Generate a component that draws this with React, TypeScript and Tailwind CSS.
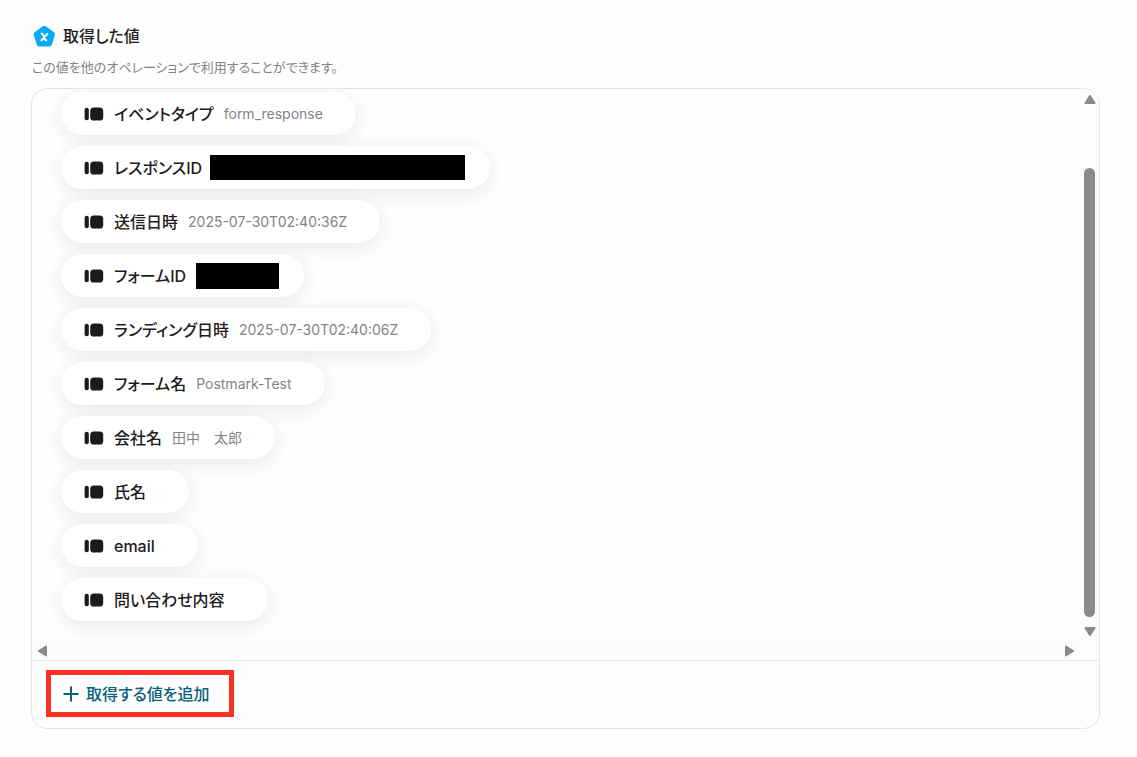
import React from "react";

interface FieldItem {
  label: string;
  value?: string;
  masked?: "long" | "short";
}

const fields: FieldItem[] = [
  { label: "イベントタイプ", value: "form_response" },
  { label: "レスポンスID", masked: "long" },
  { label: "送信日時", value: "2025-07-30T02:40:36Z" },
  { label: "フォームID", masked: "short" },
  { label: "ランディング日時", value: "2025-07-30T02:40:06Z" },
  { label: "フォーム名", value: "Postmark-Test" },
  { label: "会社名", value: "田中　太郎" },
  { label: "氏名" },
  { label: "email" },
  { label: "問い合わせ内容" },
];

const FieldIcon = () => (
  <svg className="h-[14px] w-5 shrink-0" viewBox="0 0 20 14" fill="#1c1a1e" aria-hidden="true">
    <rect x="0.6" y="0.7" width="4.2" height="12.6" rx="2" />
    <rect x="6.2" y="0.5" width="13" height="13" rx="3.6" />
  </svg>
);

const PentagonIcon = () => (
  <svg className="size-6 shrink-0" viewBox="0 0 24 24" aria-hidden="true">
    <path
      d="M10.8 2.3a2.6 2.6 0 0 1 3 0l8.2 6a2.4 2.4 0 0 1 .8 2.6l-3 9.9a2.3 2.3 0 0 1-2.2 1.6H7a2.3 2.3 0 0 1-2.2-1.6l-3-9.9a2.4 2.4 0 0 1 .8-2.6z"
      fill="#06abf6"
    />
    <path
      d="M8.8 9.8h1.1c.5 0 .8.3 1 .8l2.2 5c.2.5.5.8 1 .8h1.1M16.2 9.8h-.9l-5.8 6.6h-1"
      fill="none"
      stroke="#fff"
      strokeWidth="1.9"
      strokeLinejoin="round"
    />
  </svg>
);

interface ArrowProps {
  d: string;
  label: string;
}

const ScrollArrow: React.FC<ArrowProps> = ({ d, label }) => (
  <button type="button" aria-label={label} className="shrink-0">
    <svg className="size-[14px]" viewBox="0 0 14 14" fill="#8b898c" stroke="#8b898c" strokeWidth="2" strokeLinejoin="round">
      <path d={d} />
    </svg>
  </button>
);

const FieldPill: React.FC<{ item: FieldItem }> = ({ item }) => (
  <li className="flex h-[43px] items-center gap-[10px] rounded-full bg-white pr-[33px] pl-[23px] whitespace-nowrap shadow-[0_4px_18px_rgba(60,40,80,0.11)]">
    <FieldIcon />
    <span className="text-base font-medium text-[#1e1c20]">{item.label}</span>
    <span className="text-sm text-[#858388]">{item.value}</span>
    {item.masked === "long" && <span className="-mr-2 -ml-3 h-[25px] w-[255px] bg-black" />}
    {item.masked === "short" && <span className="-mr-2 -ml-[10px] h-[26px] w-[83px] bg-black" />}
  </li>
);

const App = () => {
  return (
    <main className="min-h-screen bg-[#fefefe] px-8 pt-6 pb-7 font-['Inter','Noto_Sans_CJK_JP',sans-serif] [font-feature-settings:'palt']">
      {/* Heading */}
      <header>
        <h1 className="flex items-center gap-[7px] text-base leading-6 font-medium text-[#1e1c20]">
          <PentagonIcon />
          取得した値
        </h1>
        <p className="mt-[9px] text-[13px] leading-5 text-[#858388]">
          この値を他のオペレーションで利用することができます。
        </p>
      </header>

      <section className="mt-[11px] mr-[5px] -ml-px overflow-hidden rounded-2xl border border-[#e6e4e8]">
        <div className="flex">
          {/* Values */}
          <div className="min-w-0 flex-1">
            <ul className="flex flex-col items-start gap-[11px] overflow-hidden pt-[3px] pb-5 pl-[29px]">
              {fields.map((item) => (
                <FieldPill key={item.label} item={item} />
              ))}
            </ul>
            {/* Horizontal scrollbar */}
            <div className="flex h-[19px] items-center justify-between bg-[#fcfafd] px-1">
              <ScrollArrow label="左へ" d="M10 2.5v9L3 7z" />
              <ScrollArrow label="右へ" d="M4 2.5v9L11 7z" />
            </div>
          </div>

          {/* Vertical scrollbar */}
          <div className="flex w-[19px] shrink-0 flex-col items-center bg-[#fdfbfe] pt-1 pb-[22px]">
            <ScrollArrow label="上へ" d="M2.5 10h9L7 3z" />
            <div className="mt-[61px] mb-[7px] w-[11px] flex-1 rounded-full bg-[#8b898c]" />
            <ScrollArrow label="下へ" d="M2.5 4h9L7 11z" />
          </div>
        </div>

        {/* Add button */}
        <div className="border-t border-[#e6e4e8] px-[14px] pt-[9px] pb-[11px]">
          <button
            type="button"
            className="flex h-[47px] w-[188px] items-center gap-[7px] border-5 border-[#ff3126] pl-3 text-base font-medium whitespace-nowrap text-[#0b5f80]"
          >
            <svg className="size-4" viewBox="0 0 16 16" stroke="currentColor" strokeWidth="2" aria-hidden="true">
              <path d="M8 .5v15M.5 8h15" />
            </svg>
            取得する値を追加
          </button>
        </div>
      </section>
    </main>
  );
};

export default App;
